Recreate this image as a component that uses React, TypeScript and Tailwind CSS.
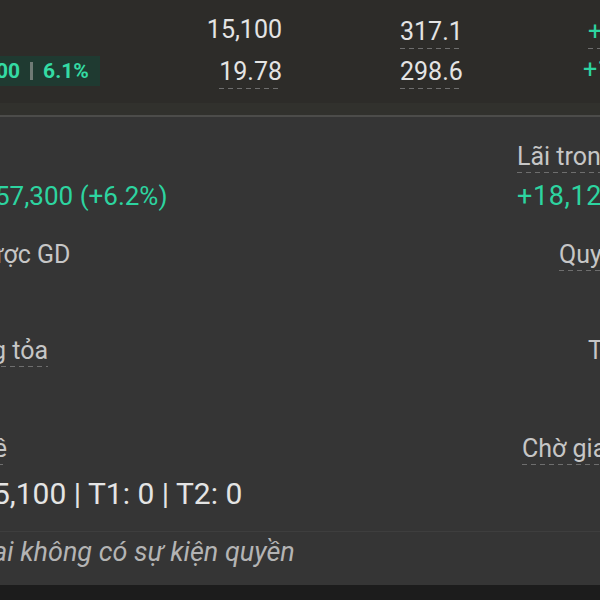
import React from "react";

function Dashed({ children, className = "" }: { children: React.ReactNode; className?: string }) {
  return (
    <span className={"inline-flex flex-col " + className}>
      <span>{children}</span>
      <span className="mt-[1px] h-px w-full bg-[linear-gradient(90deg,#6e6e6e_55%,transparent_55%)] bg-[length:9px_1px] bg-repeat-x" />
    </span>
  );
}

export default function App() {
  return (
    <div className="w-[600px] h-[600px] overflow-hidden bg-[#1c1c1c] font-['Roboto',sans-serif] whitespace-nowrap">
      {/* top band */}
      <div className="h-[103px] bg-[#2d2c29] flex flex-col pt-[10px]">
        <div className="flex items-center h-[40px] text-[25px] leading-[30px] text-[#e4e4e4]">
          <div className="w-[282px] shrink-0 text-right">15,100</div>
          <div className="w-[118px] shrink-0" />
          <div className="w-[188px] shrink-0">
            <Dashed className="mt-[6px]">317.1</Dashed>
          </div>
          <div className="shrink-0 text-[#2dd4a0]">
            <Dashed className="mt-[6px]">+1</Dashed>
          </div>
        </div>
        <div className="flex items-center h-[40px] text-[25px] leading-[30px] text-[#e4e4e4]">
          <div className="w-[160px] shrink-0">
            <div className="inline-flex items-center h-[30px] w-[100px] bg-[#1f3a31] text-[21px] font-bold text-[#34dba4]">
              <span className="-ml-[4px]">00</span>
              <span className="mx-[10px] w-[3px] h-[18px] bg-[#6f7a75]" />
              <span>6.1%</span>
            </div>
          </div>
          <div className="w-[122px] shrink-0 text-right">
            <Dashed className="mt-[6px]">19.78</Dashed>
          </div>
          <div className="w-[118px] shrink-0" />
          <div className="w-[183px] shrink-0">
            <Dashed className="mt-[6px]">298.6</Dashed>
          </div>
          <div className="shrink-0 text-[#2dd4a0]">+1</div>
        </div>
      </div>
      <div className="h-[12px] bg-[#31312d]" />
      <div className="h-[2px] bg-[#4c4c4a]" />

      {/* panel */}
      <div className="h-[468px] bg-[#353535] flex flex-col text-[25px] leading-[28px]">
        <div className="flex mt-[26px]">
          <div className="w-[517px] shrink-0" />
          <Dashed className="text-[#c6c6c6]">Lãi trong ngày</Dashed>
        </div>
        <div className="flex mt-[8px] text-[26px] leading-[30px] text-[#2dd4a0]">
          <div className="w-[517px] shrink-0">
            <span className="-ml-[5px] inline-block">57,300 (+6.2%)</span>
          </div>
          <div className="text-[27px] tracking-[0.6px]">+18,120</div>
        </div>
        <div className="flex mt-[30px] text-[#c6c6c6]">
          <div className="w-[517px] shrink-0">
            <span className="-ml-[12px] inline-block">ược GD</span>
          </div>
          <div className="pl-[42px]">
            <Dashed>Quyền</Dashed>
          </div>
        </div>
        <div className="flex mt-[66px] text-[#c6c6c6]">
          <div className="w-[517px] shrink-0">
            <Dashed className="-ml-[8px]">g tỏa</Dashed>
          </div>
          <div className="pl-[71px]">Tổng</div>
        </div>
        <div className="flex mt-[68px] text-[#c6c6c6]">
          <div className="w-[517px] shrink-0">
            <Dashed className="-ml-[20px]">hề</Dashed>
          </div>
          <div className="pl-[5px]">
            <Dashed>Chờ giao</Dashed>
          </div>
        </div>
        <div className="flex mt-[12px] text-[30px] leading-[34px] text-[#e4e4e4]">
          <span className="-ml-[7px] inline-block">5,100 | T1: 0 | T2: 0</span>
        </div>
        <div className="mt-[20px] h-px bg-[#3e3e3e]" />
        <div className="mt-[3px] text-[27px] leading-[34px] italic text-[#b4b4b4]">
          <span className="-ml-[7px] inline-block">ại không có sự kiện quyền</span>
        </div>
      </div>
    </div>
  );
}
